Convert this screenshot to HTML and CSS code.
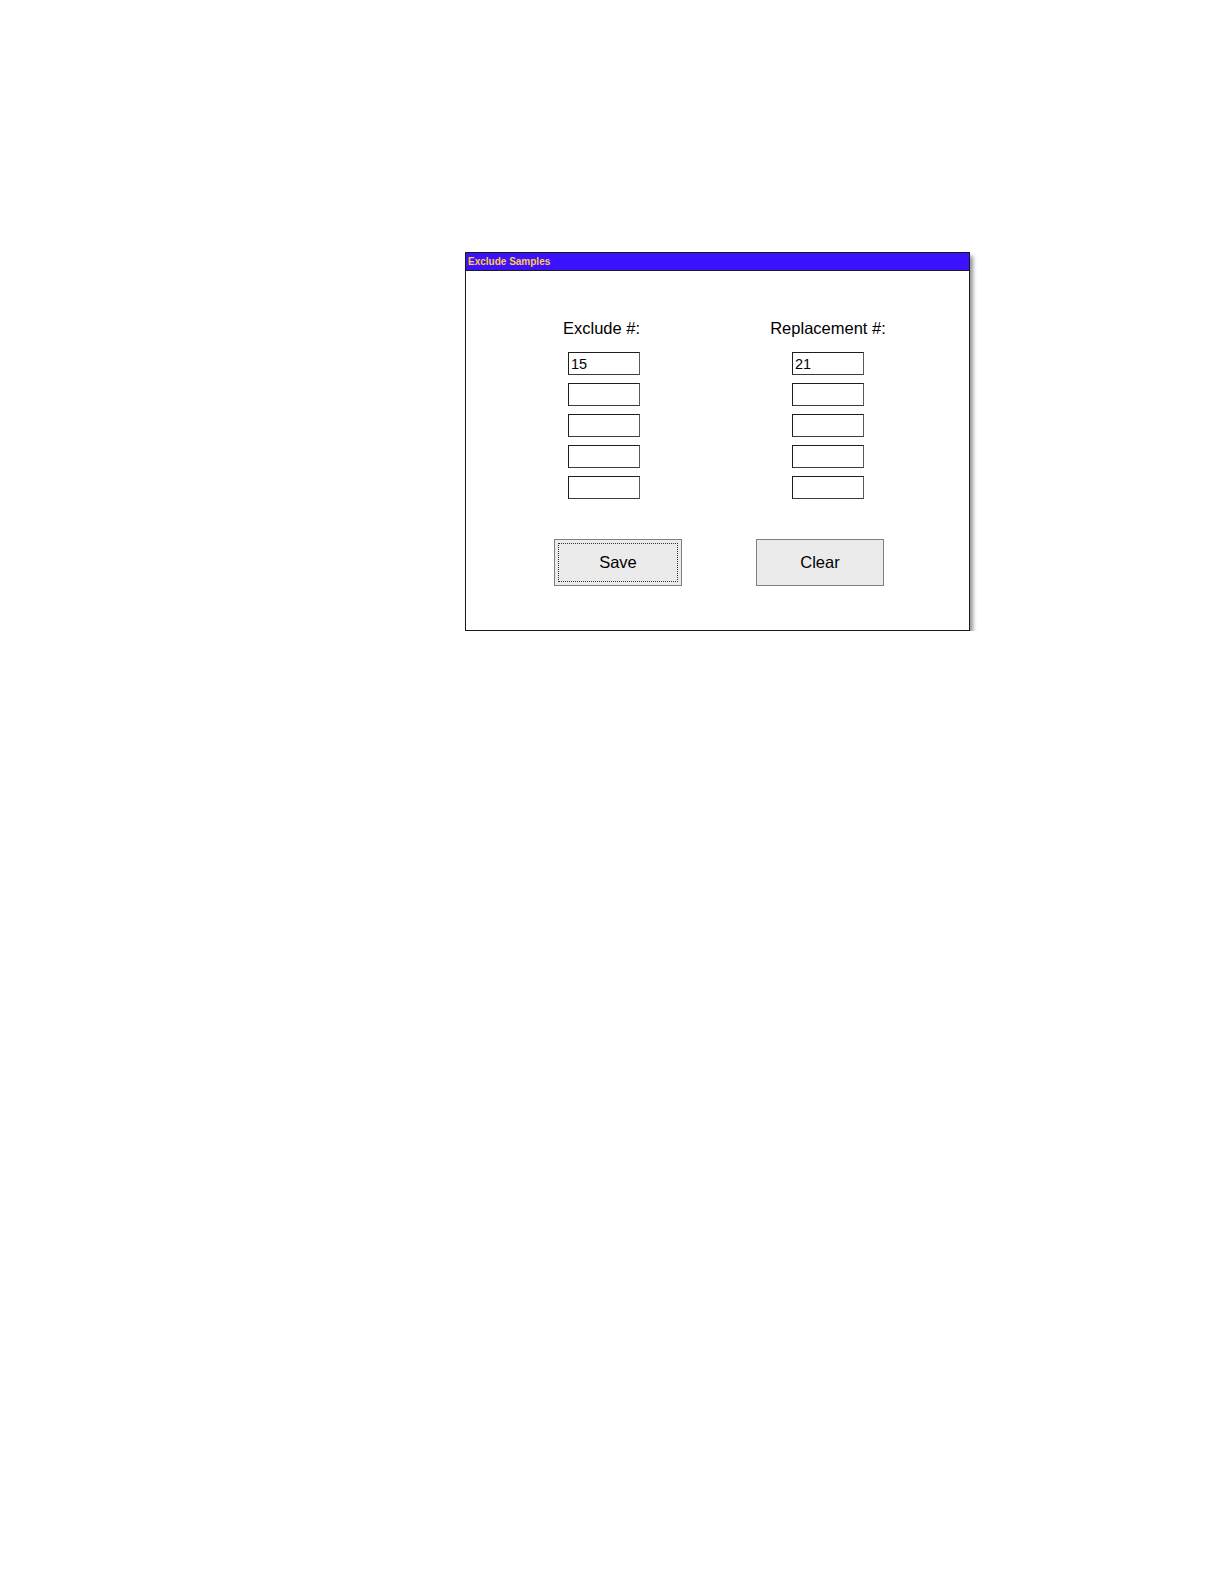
FILE: index.html
```html
<!DOCTYPE html>
<html>
<head>
<meta charset="utf-8">
<title>Exclude Samples</title>
<link rel="stylesheet" href="styles.css">
</head>
<body>
<div class="window">
  <div class="titlebar">Exclude Samples</div>
  <div class="content">
    <div class="columns">
      <div class="column">
        <div class="label label-left">Exclude #:</div>
        <div class="fields">
          <div class="field">15</div>
          <div class="field"></div>
          <div class="field"></div>
          <div class="field"></div>
          <div class="field"></div>
        </div>
      </div>
      <div class="column">
        <div class="label">Replacement #:</div>
        <div class="fields">
          <div class="field">21</div>
          <div class="field"></div>
          <div class="field"></div>
          <div class="field"></div>
          <div class="field"></div>
        </div>
      </div>
    </div>
    <div class="buttons">
      <div class="button"><span class="focus">Save</span></div>
      <div class="button"><span class="focus plain">Clear</span></div>
    </div>
  </div>
</div>
</body>
</html>
```
FILE: styles.css
```css
html, body {
  margin: 0;
  padding: 0;
  background: #ffffff;
}
body {
  font-family: "Liberation Sans", Arial, sans-serif;
  color: #000;
}
.window {
  margin: 252px 0 0 465px;
  width: 505px;
  height: 379px;
  border: 1px solid #1a1a1a;
  background: #ffffff;
  box-shadow: 3px 4px 4px rgba(0, 0, 0, 0.42);
  box-sizing: border-box;
  display: flex;
  flex-direction: column;
}
.titlebar {
  height: 18px;
  box-sizing: border-box;
  background: #3c11fe;
  border-bottom: 1px solid #1a1a1a;
  color: #ffcc44;
  font-size: 10px;
  font-weight: bold;
  line-height: 17px;
  padding-left: 2px;
}
.content {
  padding-top: 48px;
}
.columns {
  display: flex;
  padding-left: 26px;
}
.column {
  width: 224px;
  display: flex;
  flex-direction: column;
  align-items: center;
}
.label {
  font-size: 16.5px;
  line-height: 19px;
  height: 19px;
}
.label-left {
  margin-left: -5px;
}
.fields {
  margin-top: 14px;
  display: flex;
  flex-direction: column;
  gap: 8px;
}
.field {
  width: 72px;
  height: 23px;
  box-sizing: border-box;
  border: 1px solid #1e1e1e;
  border-right-color: #5a5a5a;
  border-bottom-color: #3a3a3a;
  font-size: 14.5px;
  line-height: 22px;
  padding-left: 2px;
}
.buttons {
  display: flex;
  gap: 74px;
  padding-left: 88px;
  margin-top: 40px;
}
.button {
  width: 128px;
  height: 47px;
  box-sizing: border-box;
  background: #ecebec;
  border: 1px solid #7e7e7e;
  padding: 3px;
  display: flex;
}
.focus {
  flex: 1;
  border: 1px dotted #333;
  display: flex;
  align-items: center;
  justify-content: center;
  font-size: 16.5px;
}
.focus.plain {
  border-color: transparent;
}
```
